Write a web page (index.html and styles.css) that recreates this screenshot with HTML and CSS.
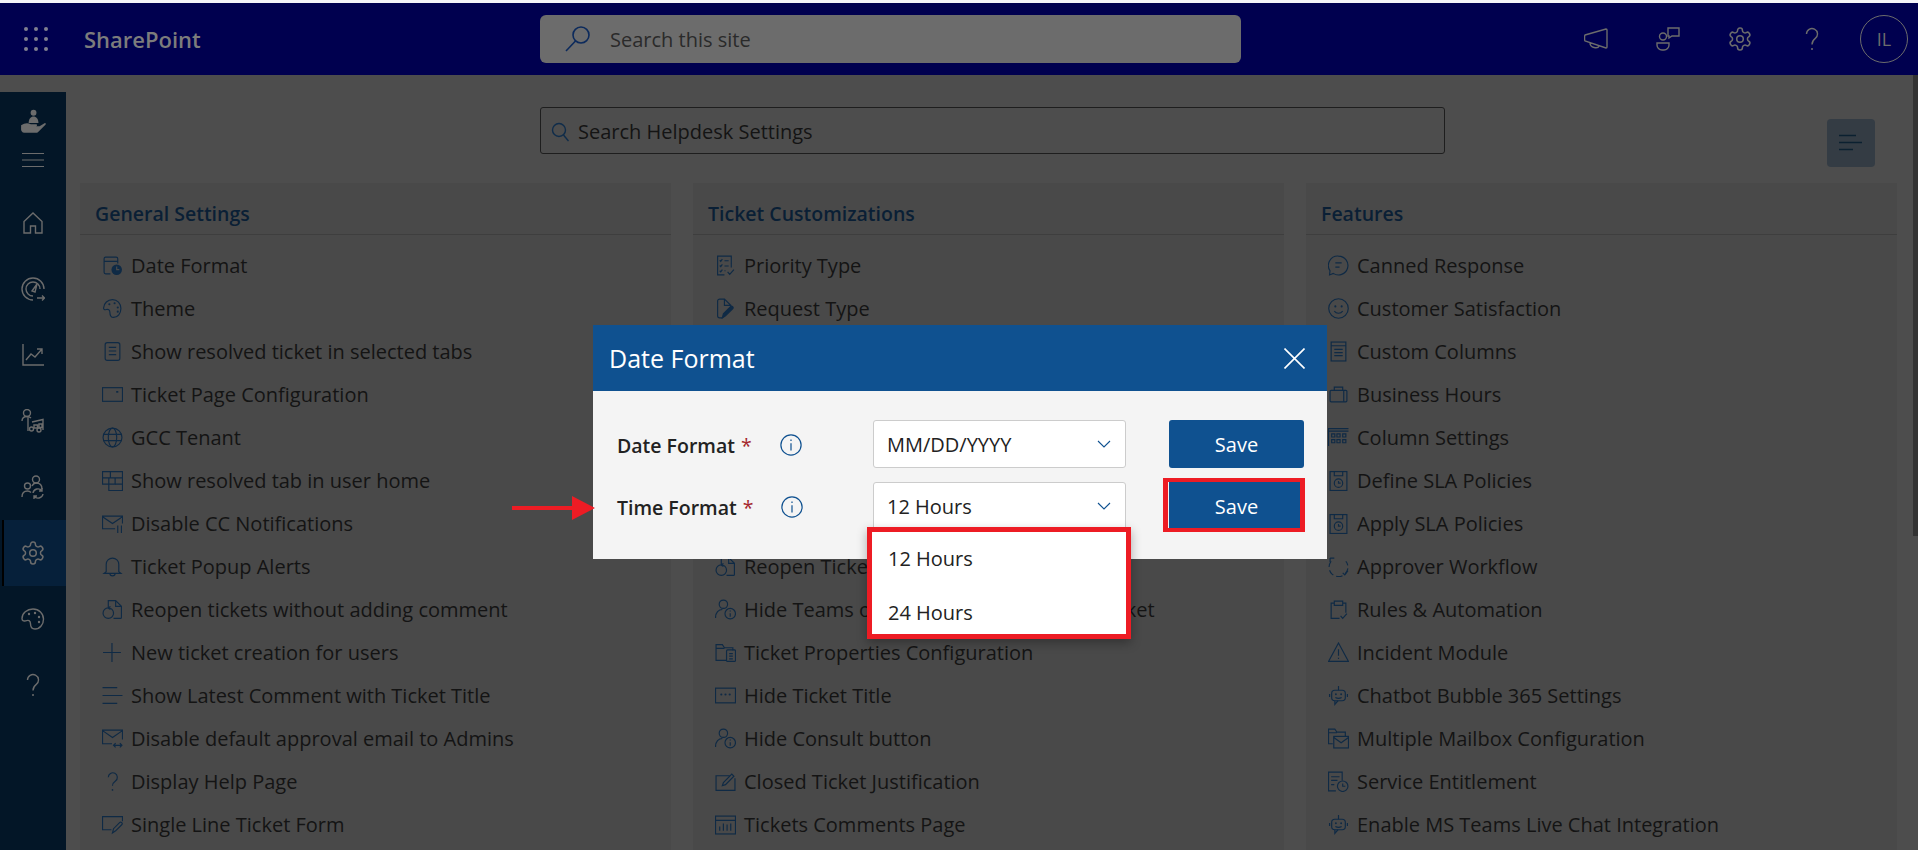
FILE: index.html
```html
<!DOCTYPE html>
<html lang="en">
<head>
  <meta charset="UTF-8">
  <title>Helpdesk Settings</title>
  <link rel="stylesheet" href="styles.css">
</head>
<body>

<!-- shared icons -->
<svg class="defs" width="0" height="0">
  <symbol id="i-date" viewBox="0 0 20 20"><path d="M15 8V3.5A1.5 1.5 0 0 0 13.5 2h-10A1.5 1.5 0 0 0 2 3.5v13A1.5 1.5 0 0 0 3.500 18H8M2 6h13"/><circle class="solid" cx="14" cy="14" r="5"/><path class="cut" d="M14 11v3h2.500"/></symbol>
  <symbol id="i-palette" viewBox="0 0 20 20"><path d="M10 1.500a8.500 8.500 0 0 0-8.500 8c0 1.500 1 2 2.500 1.500 2-.6 3.500 0 3.500 2.500 0 2.500 1 5 3.500 5 4 0 7-3.800 7-8.500 0-4.700-3.500-8.500-8-8.500z"/><circle class="dot" cx="7" cy="6" r="1"/><circle class="dot" cx="12" cy="5" r="1"/><circle class="dot" cx="15" cy="9" r="1"/><circle class="dot" cx="15" cy="13" r="1"/></symbol>
  <symbol id="i-doc" viewBox="0 0 20 20"><rect x="3" y="1.500" width="14" height="17" rx="2"/><path d="M6.500 6h7M6.500 9.500h7M6.500 13h7"/></symbol>
  <symbol id="i-wallet" viewBox="0 0 20 20"><rect x="0.500" y="3.500" width="19" height="13"/><path d="M13.500 7.500h2" stroke-width="1.600"/></symbol>
  <symbol id="i-globe" viewBox="0 0 20 20"><circle cx="10" cy="10" r="9"/><ellipse cx="10" cy="10" rx="4" ry="9"/><path d="M1.500 7h17M1.500 13h17"/></symbol>
  <symbol id="i-tiles" viewBox="0 0 20 20"><path d="M.5 1.500h19v6h-19zM.5 7.500h6v6h-6zM6.500 7.500h6v6h-6zM12.500 7.500h7v12h-13v-6h6z"/><path d="M8 1.500v6M12.500 13.500h7"/></symbol>
  <symbol id="i-mailpause" viewBox="0 0 20 20"><path d="M19.500 10V3H.5v12h12M.5 3.500L10 10l9.500-6.500M15 12v7M18.500 12v7"/></symbol>
  <symbol id="i-bell" viewBox="0 0 20 20"><path d="M4 15V8a6 6 0 0 1 12 0v7l2 1.500H2zM7.500 16.500a2.500 2.500 0 0 0 5 0"/></symbol>
  <symbol id="i-filesync" viewBox="0 0 20 20"><path d="M6 8V1.500h7l5.500 5.500v10.500a1 1 0 0 1-1 1H11M13 1.500V7h5.500"/><circle cx="6" cy="13.500" r="5"/><path d="M6 8.500l2 -1.500M6 8.500l2 1.500"/></symbol>
  <symbol id="i-plus" viewBox="0 0 20 20"><path d="M9.500 1v18M1 10h17"/></symbol>
  <symbol id="i-lines" viewBox="0 0 20 20"><path d="M.5 2.500h14M.5 10h19M.5 17.500h14"/></symbol>
  <symbol id="i-mailswap" viewBox="0 0 20 20"><path d="M19.500 11V2H.5v13h9M.5 2.500L10 9l9.500-6.500M11 16.500h8M13 14.500l-2 2 2 2M17 14.500l2 2-2 2"/></symbol>
  <symbol id="i-help" viewBox="0 0 20 20"><path d="M6 6a4.300 4.300 0 1 1 6.800 3.500C11 10.800 10 11.700 10 14"/><circle class="dot" cx="10" cy="18" r=".8"/></symbol>
  <symbol id="i-formpen" viewBox="0 0 20 20"><path d="M9 15H.5V2.500h19V7"/><path d="M10 18l1-4 6-6c1-1 3 1 2 2l-6 6z"/></symbol>
  <symbol id="i-listcheck" viewBox="0 0 20 20"><path d="M9 19H2.500V1h13v11M4.500 5l1 1 1.500-2M4.500 10l1 1 1.500-2M4.500 15l1 1 1.500-2M9 5.500h4M9 10.500h4M9 15h1M12 16l2 2.500 4-4.500"/></symbol>
  <symbol id="i-pageedit" viewBox="0 0 20 20"><path d="M7 19H4.500a2 2 0 0 1-2-2V3a2 2 0 0 1 2-2H9l6 6v2M9 1v6h6"/><path class="solidp" d="M7 19l1-4 7-7c1-1 3 1 2 2l-7 7z"/></symbol>
  <symbol id="i-folderdoc" viewBox="0 0 20 20"><path d="M11 17.500H1V2.500h6l2 3h8V8M1 6h8"/><rect x="11" y="7.500" width="8.500" height="11" rx="1"/><path d="M13.500 11h3.500M13.500 13.500h3.500M13.500 16h3.500"/></symbol>
  <symbol id="i-dots" viewBox="0 0 20 20"><rect x=".5" y="3" width="19" height="14"/><circle class="dot" cx="6" cy="9" r="1"/><circle class="dot" cx="10" cy="9" r="1"/><circle class="dot" cx="14" cy="9" r="1"/></symbol>
  <symbol id="i-userinfo" viewBox="0 0 20 20"><circle cx="8" cy="5" r="4"/><path d="M.5 18c0-5 3-8 6.500-8"/><circle cx="14.500" cy="14" r="5"/><path d="M14.500 13.500v3.500M14.500 11v.8"/></symbol>
  <symbol id="i-editbox" viewBox="0 0 20 20"><path d="M14 4.500H1v14h18V7"/><path d="M7 14l1-3 8-8 2 2-8 8z"/></symbol>
  <symbol id="i-table" viewBox="0 0 20 20"><rect x=".5" y="2" width="19" height="17"/><path d="M.5 6h19M4.500 16v-4M8 16V9M11.500 16v-6M15 16V9"/></symbol>
  <symbol id="i-chat" viewBox="0 0 20 20"><path d="M10 1a9 9 0 1 1-5 16.500L1.500 19l.4-4A9 9 0 0 1 10 1z"/><path d="M7 7.500h6M7 11.500h4"/></symbol>
  <symbol id="i-smile" viewBox="0 0 20 20"><circle cx="10" cy="10" r="9.300"/><circle class="dot" cx="7" cy="8" r="1"/><circle class="dot" cx="13" cy="8" r="1"/><path d="M6 12.500a5 5 0 0 0 8 0"/></symbol>
  <symbol id="i-doclist" viewBox="0 0 20 20"><rect x="3" y="1" width="14" height="18"/><path d="M3 4.500h14M6 8h8M6 11h8M6 14h8"/></symbol>
  <symbol id="i-case" viewBox="0 0 20 20"><rect x="2" y="6" width="16" height="11" rx="1"/><path d="M6 6V3h8v3M15 6v11"/></symbol>
  <symbol id="i-grid" viewBox="0 0 20 20"><path d="M.5 18V1.500h19M.5 4h19"/><path d="M3.500 6.500h3v3h-3zM8.500 6.500h3v3h-3zM14 6.500h3v3h-3zM3.500 12h3v3h-3zM8.500 12h3v3h-3zM14 12h3v3h-3z"/></symbol>
  <symbol id="i-sla" viewBox="0 0 20 20"><rect x="2" y="1.500" width="16" height="18"/><path d="M6 1.500v4h8v-4"/><circle cx="10" cy="12.500" r="4"/><path d="M10 10.500v2h2"/></symbol>
  <symbol id="i-approve" viewBox="0 0 20 20"><path stroke-dasharray="6 3" d="M3 5a9 9 0 1 0 14 0"/><path d="M2 2h4M2 2v4M14 16l2 2 3-4"/></symbol>
  <symbol id="i-clip" viewBox="0 0 20 20"><path d="M11 18.500H3V4h3M14 4h3v9M6 2h8v4H6zM12 16l2 2.500 4-4.500"/></symbol>
  <symbol id="i-warn" viewBox="0 0 20 20"><path d="M10 1L.5 18.500h19z"/><path d="M10 7v6M10 15v1.200"/></symbol>
  <symbol id="i-bot" viewBox="0 0 20 20"><path d="M10 1v4"/><rect x="3.500" y="5" width="13" height="10" rx="3"/><path d="M1.500 8.500v3M18.500 8.500v3M6.500 15v3.500l3-3.500M7 12c2 1 4 1 6 0"/><circle class="dot" cx="7.500" cy="8.800" r=".9"/><circle class="dot" cx="12.500" cy="8.800" r=".9"/></symbol>
  <symbol id="i-foldermail" viewBox="0 0 20 20"><path d="M4.500 15H.5V1h6l2 3h8v4M.5 4.500h8"/><rect x="5.500" y="8" width="14" height="11"/><path d="M5.500 9l7 5 7-5"/></symbol>
  <symbol id="i-docclock" viewBox="0 0 20 20"><path d="M7.500 19H.5V1h13v8M3 5.500h8M3 9h6M3 13h3"/><circle cx="14" cy="14.500" r="5"/><path d="M14 12v2.500h2.500"/></symbol>
  <symbol id="i-info" viewBox="0 0 20 20"><circle cx="10" cy="10" r="9.200"/><path d="M10 8.500V15M10 5v1.300"/></symbol>
  <symbol id="i-chev" viewBox="0 0 14 8"><path d="M1 1l6 6 6-6"/></symbol>

  <symbol id="s-hand" viewBox="0 0 24 24"><circle class="fill" cx="12.500" cy="3.500" r="2.700"/><path class="fill" d="M8 13c0-4 2-6 4.500-6S17 9 17 13z"/><path class="fill" d="M1 15c3-2 6-2.500 9-1h5c1 0 1 1.500 0 2h3l5-3c1 0 1 1 .5 1.500L17 21c-1 1-2 1-3 1H4c-2 0-3-2-3-3z"/></symbol>
  <symbol id="s-home" viewBox="0 0 24 24"><path d="M3 22V10.500L12 2l9 8.500V22h-6.500v-7h-5v7z"/></symbol>
  <symbol id="s-gauge" viewBox="0 0 24 24"><path d="M12 23a11 11 0 1 1 11-11"/><path d="M12 19a7 7 0 1 1 7-7"/><path d="M11 14l5-7-2 8zM16 21h7.500M21 18.500l2.500 2.500-2.500 2.500"/></symbol>
  <symbol id="s-chart" viewBox="0 0 24 24"><path d="M2 1v21h21M5 17l5-6 4 3 7-8M16 6h5v5"/></symbol>
  <symbol id="s-peoplebus" viewBox="0 0 24 24"><circle cx="6" cy="4" r="3.500"/><path d="M1 12c0-3 2-4.500 5-4.500 2 0 3 .6 4 1.500M7 8v14"/><path d="M11 13l11-2.500V21M13 16h3.500v3H13zM18 15h3v3.500h-3z"/><circle cx="10.500" cy="20" r="2"/><circle cx="18" cy="21" r="2"/></symbol>
  <symbol id="s-peoplesync" viewBox="0 0 24 24"><circle cx="15" cy="4.500" r="3.500"/><circle cx="6.500" cy="11" r="3"/><path d="M1 22c0-4 2-6 5.500-6 1.500 0 2.500.5 3.500 1.500M11 11c1-2 2-3 4-3 4 0 6 2 6 6"/><path d="M12 18a5 5 0 0 1 9-2M22 19a5 5 0 0 1-9 2M21 13v3h-3M13 24v-3h3"/></symbol>
  <symbol id="s-gear" viewBox="1 1 22 22"><path d="M12.220 2h-.44a2 2 0 0 0-2 2v.18a2 2 0 0 1-1 1.730l-.43.250a2 2 0 0 1-2 0l-.15-.080a2 2 0 0 0-2.730.730l-.22.380a2 2 0 0 0 .73 2.730l.15.100a2 2 0 0 1 1 1.720v.510a2 2 0 0 1-1 1.740l-.15.090a2 2 0 0 0-.73 2.730l.22.380a2 2 0 0 0 2.730.730l.15-.080a2 2 0 0 1 2 0l.43.250a2 2 0 0 1 1 1.730V20a2 2 0 0 0 2 2h.44a2 2 0 0 0 2-2v-.18a2 2 0 0 1 1-1.730l.43-.250a2 2 0 0 1 2 0l.15.080a2 2 0 0 0 2.730-.730l.22-.390a2 2 0 0 0-.73-2.730l-.15-.080a2 2 0 0 1-1-1.740v-.5a2 2 0 0 1 1-1.740l.15-.090a2 2 0 0 0 .73-2.730l-.22-.380a2 2 0 0 0-2.730-.730l-.15.080a2 2 0 0 1-2 0l-.43-.250a2 2 0 0 1-1-1.730V4a2 2 0 0 0-2-2z"/><circle cx="12" cy="12" r="3"/></symbol>
  <symbol id="s-palette" viewBox="0 0 24 24"><path d="M12 2C6 2 1 6 1 11.500c0 2 1.500 3 3.500 2.300 3-1 5-.3 5 3 0 3 1.500 5.200 4.500 5.200 5 0 8.500-4.500 8.500-10S18 2 12 2z"/><circle class="fill" cx="8" cy="7" r="1.200"/><circle class="fill" cx="14" cy="6" r="1.200"/><circle class="fill" cx="18" cy="10" r="1.200"/><circle class="fill" cx="18" cy="15" r="1.200"/></symbol>
  <symbol id="s-help" viewBox="0 0 24 24"><path d="M6.500 7a5.500 5.500 0 1 1 8.800 4.400c-2.300 1.700-3.300 2.900-3.300 6"/><circle class="fill" cx="12" cy="22" r="1"/></symbol>
  <symbol id="s-mega" viewBox="0 0 24 24"><path d="M1 8l21-6c.6 0 1 .4 1 1v17c0 .6-.4 1-1 1L1 14c-.6-.5-.6-5.500 0-6zM6 16c0 5 8 6 9 3"/></symbol>
  <symbol id="s-peoplechat" viewBox="0 0 24 24"><circle cx="7" cy="9.500" r="3.500"/><path d="M1 16h12v2a5 5 0 0 1-5 5H6a5 5 0 0 1-5-5zM12 1h11v8h-7l-3 2v-2h-1z"/></symbol>
</svg>

<header class="topbar">
  <div class="brand">
    <svg class="waffle" width="24" height="24" viewBox="0 0 24 24"><g><circle cx="2" cy="2" r="2"/><circle cx="12" cy="2" r="2"/><circle cx="22" cy="2" r="2"/><circle cx="2" cy="12" r="2"/><circle cx="12" cy="12" r="2"/><circle cx="22" cy="12" r="2"/><circle cx="2" cy="22" r="2"/><circle cx="12" cy="22" r="2"/><circle cx="22" cy="22" r="2"/></g></svg>
    <span class="brand-name">SharePoint</span>
  </div>
  <div class="site-search">
    <svg class="site-search-icon" width="28" height="28" viewBox="0 0 28 28"><circle cx="17" cy="10" r="8"/><path d="M11.500 16L2 26"/></svg>
    <span>Search this site</span>
  </div>
  <div class="top-actions">
    <button class="top-btn"><svg class="stroke"><use href="#s-mega"/></svg></button>
    <button class="top-btn"><svg class="stroke"><use href="#s-peoplechat"/></svg></button>
    <button class="top-btn"><svg class="stroke"><use href="#s-gear"/></svg></button>
    <button class="top-btn"><svg class="stroke"><use href="#s-help"/></svg></button>
    <div class="avatar">IL</div>
  </div>
</header>

<div class="layout">
  <nav class="sidebar">
    <div class="side-top"><svg class="stroke"><use href="#s-hand"/></svg></div>
    <div class="side-menu"><svg width="22" height="16" viewBox="0 0 22 16"><path d="M0 1.500h22M0 8h22M0 14.500h22"/></svg></div>
    <a class="side-item"><svg class="stroke"><use href="#s-home"/></svg></a>
    <a class="side-item"><svg class="stroke"><use href="#s-gauge"/></svg></a>
    <a class="side-item"><svg class="stroke"><use href="#s-chart"/></svg></a>
    <a class="side-item"><svg class="stroke"><use href="#s-peoplebus"/></svg></a>
    <a class="side-item"><svg class="stroke"><use href="#s-peoplesync"/></svg></a>
    <a class="side-item active"><svg class="stroke"><use href="#s-gear"/></svg></a>
    <a class="side-item"><svg class="stroke"><use href="#s-palette"/></svg></a>
    <a class="side-item"><svg class="stroke"><use href="#s-help"/></svg></a>
  </nav>

  <main class="content">
    <div class="toolbar">
      <div class="settings-search">
        <svg width="18" height="20" viewBox="0 0 18 20"><circle cx="8" cy="8" r="6.500"/><path d="M12.500 13l5 6"/></svg>
        <span>Search Helpdesk Settings</span>
      </div>
      <button class="toggle-btn"><svg width="24" height="18" viewBox="0 0 24 18"><path d="M0 1.500h17M0 8.500h23M0 15.500h14"/></svg></button>
    </div>

    <div class="panels">
      <section class="panel">
        <h2>General Settings</h2>
        <ul>
          <li><svg class="ico"><use href="#i-date"/></svg>Date Format</li>
          <li><svg class="ico"><use href="#i-palette"/></svg>Theme</li>
          <li><svg class="ico"><use href="#i-doc"/></svg>Show resolved ticket in selected tabs</li>
          <li><svg class="ico"><use href="#i-wallet"/></svg>Ticket Page Configuration</li>
          <li><svg class="ico"><use href="#i-globe"/></svg>GCC Tenant</li>
          <li><svg class="ico"><use href="#i-tiles"/></svg>Show resolved tab in user home</li>
          <li><svg class="ico"><use href="#i-mailpause"/></svg>Disable CC Notifications</li>
          <li><svg class="ico"><use href="#i-bell"/></svg>Ticket Popup Alerts</li>
          <li><svg class="ico"><use href="#i-filesync"/></svg>Reopen tickets without adding comment</li>
          <li><svg class="ico"><use href="#i-plus"/></svg>New ticket creation for users</li>
          <li><svg class="ico"><use href="#i-lines"/></svg>Show Latest Comment with Ticket Title</li>
          <li><svg class="ico"><use href="#i-mailswap"/></svg>Disable default approval email to Admins</li>
          <li><svg class="ico"><use href="#i-help"/></svg>Display Help Page</li>
          <li><svg class="ico"><use href="#i-formpen"/></svg>Single Line Ticket Form</li>
        </ul>
      </section>

      <section class="panel">
        <h2>Ticket Customizations</h2>
        <ul>
          <li><svg class="ico"><use href="#i-listcheck"/></svg>Priority Type</li>
          <li><svg class="ico"><use href="#i-pageedit"/></svg>Request Type</li>
          <!-- rows behind the dialog -->
          <li></li>
          <li></li>
          <li></li>
          <li></li>
          <li></li>
          <li><svg class="ico"><use href="#i-filesync"/></svg>Reopen Tickets</li>
          <li><svg class="ico"><use href="#i-userinfo"/></svg>Hide Teams option while creating new ticket</li>
          <li><svg class="ico"><use href="#i-folderdoc"/></svg>Ticket Properties Configuration</li>
          <li><svg class="ico"><use href="#i-dots"/></svg>Hide Ticket Title</li>
          <li><svg class="ico"><use href="#i-userinfo"/></svg>Hide Consult button</li>
          <li><svg class="ico"><use href="#i-editbox"/></svg>Closed Ticket Justification</li>
          <li><svg class="ico"><use href="#i-table"/></svg>Tickets Comments Page</li>
        </ul>
      </section>

      <section class="panel">
        <h2>Features</h2>
        <ul>
          <li><svg class="ico"><use href="#i-chat"/></svg>Canned Response</li>
          <li><svg class="ico"><use href="#i-smile"/></svg>Customer Satisfaction</li>
          <li><svg class="ico"><use href="#i-doclist"/></svg>Custom Columns</li>
          <li><svg class="ico"><use href="#i-case"/></svg>Business Hours</li>
          <li><svg class="ico"><use href="#i-grid"/></svg>Column Settings</li>
          <li><svg class="ico"><use href="#i-sla"/></svg>Define SLA Policies</li>
          <li><svg class="ico"><use href="#i-sla"/></svg>Apply SLA Policies</li>
          <li><svg class="ico"><use href="#i-approve"/></svg>Approver Workflow</li>
          <li><svg class="ico"><use href="#i-clip"/></svg>Rules &amp; Automation</li>
          <li><svg class="ico"><use href="#i-warn"/></svg>Incident Module</li>
          <li><svg class="ico"><use href="#i-bot"/></svg>Chatbot Bubble 365 Settings</li>
          <li><svg class="ico"><use href="#i-foldermail"/></svg>Multiple Mailbox Configuration</li>
          <li><svg class="ico"><use href="#i-docclock"/></svg>Service Entitlement</li>
          <li><svg class="ico"><use href="#i-bot"/></svg>Enable MS Teams Live Chat Integration</li>
        </ul>
      </section>
    </div>
  </main>
  <div class="scroll-thumb"></div>
</div>

<!-- Date format dialog -->
<div class="dialog">
  <div class="dialog-head">
    <span>Date Format</span>
    <svg class="dialog-close" width="21" height="21" viewBox="0 0 21 21"><path d="M.5 .5l20 20M20.500 .5l-20 20"/></svg>
  </div>
  <div class="dialog-body">
    <div class="field-label">Date Format <b>*</b><svg class="info"><use href="#i-info"/></svg></div>
    <div class="select">MM/DD/YYYY<svg class="chev"><use href="#i-chev"/></svg></div>
    <button class="save">Save</button>

    <div class="field-label">Time Format <b>*</b><svg class="info"><use href="#i-info"/></svg></div>
    <div class="select">12 Hours<svg class="chev"><use href="#i-chev"/></svg>
      <div class="dropdown">
        <div class="dropdown-item">12 Hours</div>
        <div class="dropdown-item">24 Hours</div>
      </div>
    </div>
    <button class="save save-marked">Save</button>
  </div>
</div>

<svg class="callout-arrow" width="84" height="24" viewBox="0 0 84 24"><path d="M0 10h60V0l23 12-23 12V14H0z"/></svg>

</body>
</html>
```

FILE: styles.css
```css
* {
  margin: 0;
  padding: 0;
  box-sizing: border-box;
}

html, body {
  width: 100%;
  height: 100%;
  background: #4d4d4d;
  color: #141414;
  font-family: "Open Sans", sans-serif;
  font-size: 20px;
  overflow: hidden;
}

.defs {
  position: absolute;
}

svg {
  fill: none;
}

button {
  border: none;
  font-family: inherit;
  background: none;
}

/* top bar */
.topbar {
  height: 75px;
  border-top: 3px solid #f4f4f8;
  background: #00004f;
  display: flex;
  align-items: center;
}

.brand {
  width: 540px;
  padding-left: 24px;
  display: flex;
  align-items: center;
}

.waffle {
  fill: #7f7f8f;
}

.brand-name {
  margin-left: 36px;
  font-size: 22px;
  font-weight: 600;
  color: #7c7c7c;
}

.site-search {
  width: 701px;
  height: 48px;
  background: #6c6c6c;
  border-radius: 6px;
  display: flex;
  align-items: center;
  padding-left: 24px;
  gap: 18px;
  color: #2a2a2a;
}

.site-search-icon {
  stroke: #0c2a5c;
  stroke-width: 1.600;
}

.top-actions {
  margin-left: auto;
  margin-right: 10px;
  display: flex;
  align-items: center;
}

.top-btn {
  width: 72px;
  display: flex;
  justify-content: center;
}

.stroke {
  width: 24px;
  height: 24px;
  stroke: #6c6c6c;
  stroke-width: 1.400;
}

.stroke .fill,
.fill {
  fill: #6c6c6c;
  stroke: none;
}

.avatar {
  width: 48px;
  height: 48px;
  margin-left: 12px;
  border: 1px solid #6c6c6c;
  border-radius: 50%;
  color: #6c6c6c;
  font-size: 18px;
  display: flex;
  align-items: center;
  justify-content: center;
}

/* page */
.layout {
  display: flex;
  height: 775px;
  position: relative;
}

.sidebar {
  width: 66px;
  margin-top: 17px;
  padding-top: 10px;
  background: #031627;
  display: flex;
  flex-direction: column;
  flex-shrink: 0;
}

.side-top {
  height: 40px;
  display: flex;
  align-items: center;
  justify-content: center;
}

.side-top svg {
  width: 26px;
  height: 26px;
}

.side-menu {
  height: 36px;
  margin-bottom: 12px;
  display: flex;
  align-items: center;
  justify-content: center;
}

.side-menu path {
  stroke: #6c6c6c;
  stroke-width: 1.200;
}

.side-item {
  height: 66px;
  display: flex;
  align-items: center;
  justify-content: center;
}

.side-item.active {
  background: #06203a;
  border-left: 2px solid #000;
  margin-left: 2px;
  padding-right: 4px;
}

.content {
  flex: 1;
  min-width: 0;
}

.toolbar {
  height: 108px;
  padding: 32px 43px 0 474px;
  display: flex;
  align-items: flex-start;
}

.settings-search {
  width: 905px;
  height: 47px;
  border: 1px solid #1e1e1e;
  border-radius: 3px;
  display: flex;
  align-items: center;
  padding: 2px 0 0 10px;
  gap: 9px;
  color: #141414;
}

.settings-search svg {
  stroke: #0f2c4a;
  stroke-width: 1.400;
}

.toggle-btn {
  width: 48px;
  height: 48px;
  margin-left: auto;
  margin-top: 12px;
  background: #343c44;
  border-radius: 4px;
  display: flex;
  align-items: center;
  justify-content: center;
}

.toggle-btn svg {
  stroke: #0b2030;
  stroke-width: 1.500;
}

.panels {
  display: grid;
  grid-template-columns: repeat(3, 1fr);
  gap: 22px;
  padding: 0 21px 0 14px;
}

.panel {
  background: #494949;
  height: 700px;
}

.panel h2 {
  height: 52px;
  padding: 19px 0 0 15px;
  border-bottom: 1px solid #3e3e3e;
  font-size: 19.500px;
  line-height: 24px;
  font-weight: 600;
  color: #0a1f35;
}

.panel ul {
  list-style: none;
  padding-top: 9px;
}

.panel li {
  width: fit-content;
  height: 43px;
  padding-left: 22px;
  display: flex;
  align-items: center;
  gap: 8px;
  white-space: nowrap;
}

.ico {
  width: 21px;
  height: 21px;
  flex-shrink: 0;
  stroke: #0f2a45;
  stroke-width: 1.100;
}

.ico .dot,
.dot {
  fill: #0f2a45;
  stroke: none;
}

.solid {
  fill: #0f2a45;
  stroke: none;
}

.solidp {
  fill: #0f2a45;
}

.cut {
  stroke: #494949;
}

.scroll-thumb {
  position: absolute;
  top: 0;
  right: 0;
  width: 5px;
  height: 461px;
  background: #333;
}

/* dialog */
.dialog {
  position: absolute;
  left: 593px;
  top: 325px;
  width: 734px;
  height: 234px;
  background: #f4f4f4;
}

.dialog-head {
  height: 66px;
  padding: 0 22px 0 16px;
  background: #0f5190;
  color: #fff;
  font-size: 25px;
  display: flex;
  align-items: center;
  justify-content: space-between;
}

.dialog-close {
  stroke: #fff;
  stroke-width: 1.600;
}

.dialog-body {
  display: grid;
  grid-template-columns: 256px 253px 178px;
  row-gap: 14px;
  grid-auto-rows: 48px;
  padding: 29px 0 0 24px;
}

.field-label {
  display: flex;
  align-items: center;
  padding-top: 2px;
  font-size: 19.500px;
  font-weight: 600;
  color: #222;
}

.field-label b {
  margin-left: 6px;
  font-weight: 400;
  color: #a4262c;
}

.info {
  width: 22px;
  height: 22px;
  margin-left: 28px;
  stroke: #0f5190;
  stroke-width: 1.100;
}

.select {
  position: relative;
  background: #fff;
  border: 1px solid #ccc;
  border-radius: 3px;
  padding: 0 14px 0 13px;
  display: flex;
  align-items: center;
  justify-content: space-between;
  color: #222;
}

.chev {
  width: 14px;
  height: 8px;
  stroke: #0f5190;
  stroke-width: 1.100;
}

.dropdown {
  position: absolute;
  left: -7px;
  top: 44px;
  width: 264px;
  height: 112px;
  border: 5px solid #ed1c24;
  background: #fff;
  padding: 5px 0 0 16px;
  display: flex;
  flex-direction: column;
  gap: 12px;
  box-shadow: 0 4px 10px rgba(0, 0, 0, 0.3);
  z-index: 2;
}

.dropdown-item {
  height: 42px;
  display: flex;
  align-items: center;
}

.save {
  position: relative;
  margin-left: 43px;
  background: #0f5190;
  border-radius: 3px;
  color: #fff;
  font-size: 20px;
}

.save-marked {
  border-radius: 0;
}

.save-marked::after {
  content: "";
  box-sizing: border-box;
  position: absolute;
  left: -6px;
  top: -4px;
  width: 142px;
  height: 54px;
  border: solid #ed1c24;
  border-width: 4px 5px;
}

.callout-arrow {
  position: absolute;
  left: 512px;
  top: 496px;
  fill: #ed1c24;
}
```
